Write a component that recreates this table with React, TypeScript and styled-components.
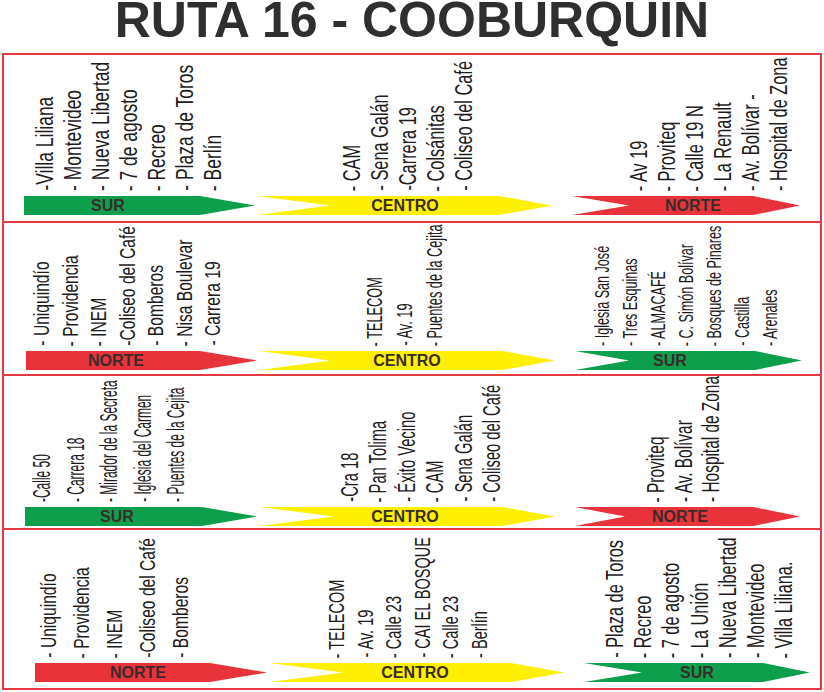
import React from "react";
import styled, { createGlobalStyle } from "styled-components";

const RED_LINE = "#e23a3f";
const GREEN = "#0e9f4d";
const YELLOW = "#fff000";
const RED = "#e8333a";

const Global = createGlobalStyle`
  html, body { margin: 0; padding: 0; background: #ffffff; }
  body { font-family: "Liberation Sans", Arial, sans-serif; }
`;

const Page = styled.div`
  width: 824px;
  height: 692px;
  background: #ffffff;
  overflow: hidden;
`;

const Title = styled.h1`
  margin: 0;
  height: 53px;
  line-height: 41px;
  font-size: 50px;
  font-weight: 700;
  color: #2f2f2f;
  text-align: center;
  font-family: "Liberation Sans", Arial, sans-serif;
`;

const Board = styled.div`
  margin: 0 2px;
  width: 820px;
  box-sizing: border-box;
  border: 2px solid ${RED_LINE};
`;

const Row = styled.div<{ $h: number; $pl: number; $pb: number; $last?: boolean }>`
  display: flex;
  align-items: stretch;
  box-sizing: border-box;
  height: ${(p) => p.$h}px;
  padding-left: ${(p) => p.$pl}px;
  padding-bottom: ${(p) => p.$pb}px;
  border-bottom: ${(p) => (p.$last ? "none" : `2px solid ${RED_LINE}`)};
`;

const Section = styled.div<{ $w: number; $ml: number }>`
  flex: none;
  width: ${(p) => p.$w}px;
  margin-left: ${(p) => p.$ml}px;
  min-height: 0;
  display: flex;
  flex-direction: column;
  justify-content: flex-end;
  gap: 5px;
`;

const Stops = styled.div<{ $ml: number }>`
  flex: none;
  display: flex;
  align-items: flex-end;
  margin-left: ${(p) => p.$ml}px;
`;

const Stop = styled.div<{ $pitch: number; $fs: number }>`
  flex: none;
  width: ${(p) => p.$pitch}px;
  line-height: ${(p) => p.$pitch}px;
  font-size: ${(p) => p.$fs}px;
  font-family: "Liberation Sans", Arial, sans-serif;
  color: #1e1b1c;
  white-space: nowrap;
  writing-mode: vertical-rl;
  transform: rotate(180deg);
`;

const StopText = styled.span<{ $sc: number }>`
  display: inline-block;
  transform: scaleY(${(p) => p.$sc});
  transform-origin: 50% 0;
`;

const Arrow = styled.div<{
  $color: string;
  $head: number;
  $notch: number;
  $padL: number;
  $padR: number;
}>`
  flex: none;
  height: 19px;
  box-sizing: border-box;
  background: ${(p) => p.$color};
  clip-path: polygon(
    0 0,
    calc(100% - ${(p) => p.$head}px) 0,
    100% 50%,
    calc(100% - ${(p) => p.$head}px) 100%,
    0 100%,
    ${(p) => p.$notch}px 50%
  );
  display: flex;
  align-items: center;
  justify-content: center;
  padding-left: ${(p) => p.$padL}px;
  padding-right: ${(p) => p.$padR}px;
  font: 700 16px "Liberation Sans", Arial, sans-serif;
  color: #3a2b2b;
  line-height: 19px;
`;

type Sec = {
  w: number;
  ml: number;
  color: string;
  label: string;
  cx: number;
  head: number;
  notch: number;
  stopsMl: number;
  pitch: number;
  fs: number;
  sc: number;
  stops: string[];
};

type RowData = { h: number; pl: number; pb: number; last?: boolean; sections: Sec[] };

const rows: RowData[] = [
  {
    h: 168,
    pl: 20,
    pb: 6,
    sections: [
      {
        w: 231, ml: 0, color: GREEN, label: "SUR", cx: 84, head: 55, notch: 0,
        stopsMl: 7, pitch: 28, fs: 23, sc: 0.76,
        stops: ["-Villa Liliana", "- Montevideo", "- Nueva Libertad", "- 7 de agosto", "- Recreo", "- Plaza de Toros", "- Berlín"],
      },
      {
        w: 295, ml: 2, color: YELLOW, label: "CENTRO", cx: 148, head: 53, notch: 73,
        stopsMl: 81, pitch: 28, fs: 23, sc: 0.71,
        stops: ["- CAM", "- Sena Galán", "-Carrera 19", "- Colsánitas", "- Coliseo del Café"],
      },
      {
        w: 228, ml: 20, color: RED, label: "NORTE", cx: 121, head: 47, notch: 57,
        stopsMl: 53, pitch: 28, fs: 23, sc: 0.71,
        stops: ["- Av 19", "- Proviteq", "- Calle 19 N", "- La Renault", "- Av. Bolívar -", "- Hospital de Zona"],
      },
    ],
  },
  {
    h: 153,
    pl: 22,
    pb: 4,
    sections: [
      {
        w: 231, ml: 0, color: RED, label: "NORTE", cx: 90, head: 57, notch: 0,
        stopsMl: 2, pitch: 28.5, fs: 22, sc: 0.71,
        stops: ["- Uniquindío", "- Providencia", "- INEM", "-Coliseo del Café", "- Bomberos", "- Nisa Boulevar", "- Carrera 19"],
      },
      {
        w: 295, ml: 3, color: YELLOW, label: "CENTRO", cx: 147, head: 53, notch: 70,
        stopsMl: 100, pitch: 30, fs: 22, sc: 0.58,
        stops: ["- TELECOM", "- Av. 19", "- Puentes de la Cejita"],
      },
      {
        w: 227, ml: 20, color: GREEN, label: "SUR", cx: 95, head: 47, notch: 54,
        stopsMl: 13, pitch: 28, fs: 20, sc: 0.63,
        stops: ["- Iglesia San José", "- Tres Esquinas", "- ALMACAFÉ", "- C. Simón Bolívar", "- Bosques de Pinares", "- Castilla", "- Arenales"],
      },
    ],
  },
  {
    h: 154,
    pl: 21,
    pb: 2,
    sections: [
      {
        w: 232, ml: 0, color: GREEN, label: "SUR", cx: 92, head: 55, notch: 0,
        stopsMl: 1, pitch: 33.5, fs: 23, sc: 0.52,
        stops: ["-Calle 50", "- Carrera 18", "- Mirador de la Secreta", "- Iglesia del Carmen", "- Puentes de la Cejita"],
      },
      {
        w: 295, ml: 3, color: YELLOW, label: "CENTRO", cx: 145, head: 53, notch: 73,
        stopsMl: 76, pitch: 28.4, fs: 23, sc: 0.64,
        stops: ["-Cra 18", "- Pan Tolima", "- Éxito Vecino", "- CAM", "- Sena Galán", "- Coliseo del Café"],
      },
      {
        w: 225, ml: 20, color: RED, label: "NORTE", cx: 105, head: 47, notch: 50,
        stopsMl: 68, pitch: 27.5, fs: 23, sc: 0.67,
        stops: ["- Proviteq", "- Av. Bolívar", "- Hospital de Zona"],
      },
    ],
  },
  {
    h: 158,
    pl: 31,
    pb: 6,
    last: true,
    sections: [
      {
        w: 232, ml: 0, color: RED, label: "NORTE", cx: 103, head: 57, notch: 0,
        stopsMl: -3.5, pitch: 33, fs: 22, sc: 0.71,
        stops: ["- Uniquindío", "- Providencia", "- INEM", "-Coliseo del Café", "- Bomberos"],
      },
      {
        w: 294, ml: 3, color: YELLOW, label: "CENTRO", cx: 145, head: 53, notch: 73,
        stopsMl: 53, pitch: 28.6, fs: 22, sc: 0.66,
        stops: ["- TELECOM", "- Av. 19", "- Calle 23", "- CAI EL BOSQUE", "- Calle 23", "- Berlín"],
      },
      {
        w: 226, ml: 20, color: GREEN, label: "SUR", cx: 113, head: 47, notch: 58,
        stopsMl: 17, pitch: 28.2, fs: 23, sc: 0.71,
        stops: ["- Plaza de Toros", "- Recreo", "- 7 de agosto", "- La Unión", "- Nueva Libertad", "- Montevideo", "- Villa Liliana."],
      },
    ],
  },
];

function RouteSection({ s }: { s: Sec }) {
  const shift = 2 * s.cx - s.w;
  return (
    <Section $w={s.w} $ml={s.ml}>
      <Stops $ml={s.stopsMl}>
        {s.stops.map((t, i) => (
          <Stop key={i} $pitch={s.pitch} $fs={s.fs}>
            <StopText $sc={s.sc}>{t}</StopText>
          </Stop>
        ))}
      </Stops>
      <Arrow
        $color={s.color}
        $head={s.head}
        $notch={s.notch}
        $padL={Math.max(shift, 0)}
        $padR={Math.max(-shift, 0)}
      >
        {s.label}
      </Arrow>
    </Section>
  );
}

export default function App() {
  return (
    <Page>
      <Global />
      <Title>RUTA 16 - COOBURQUIN</Title>
      <Board>
        {rows.map((r, i) => (
          <Row key={i} $h={r.h} $pl={r.pl} $pb={r.pb} $last={r.last}>
            {r.sections.map((s, j) => (
              <RouteSection key={j} s={s} />
            ))}
          </Row>
        ))}
      </Board>
    </Page>
  );
}
